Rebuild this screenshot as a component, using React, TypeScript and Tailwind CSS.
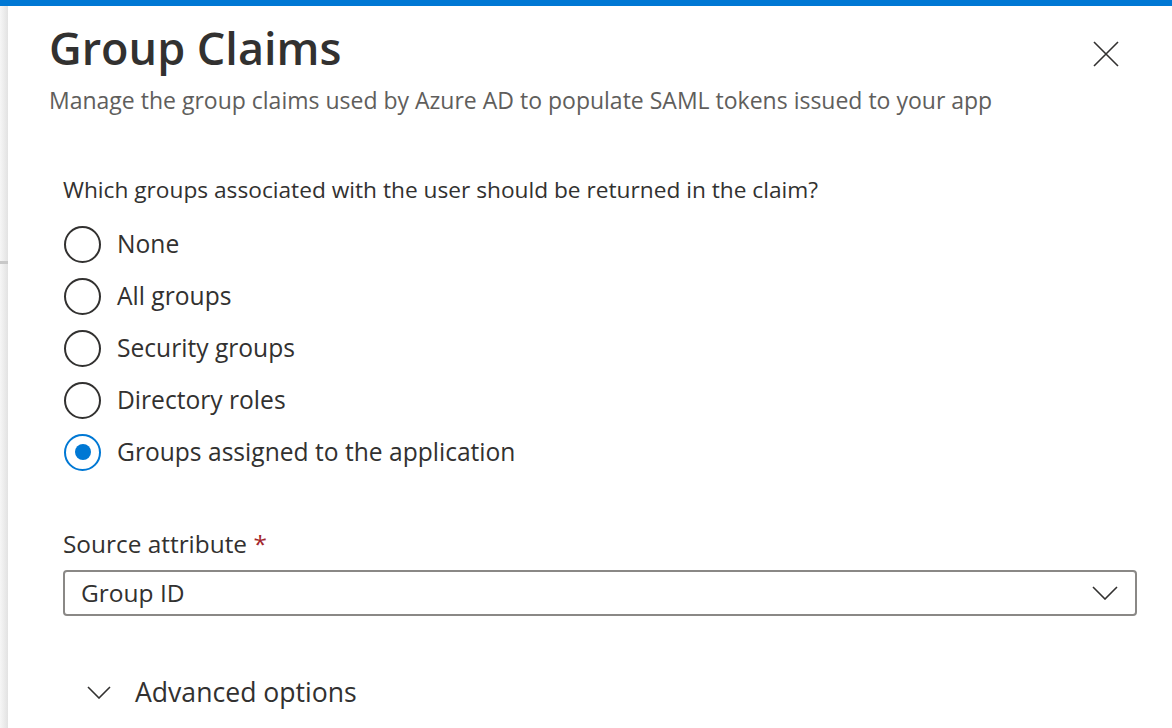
import React, { useState } from "react";

const options = [
  "None",
  "All groups",
  "Security groups",
  "Directory roles",
  "Groups assigned to the application",
];

const font = { fontFamily: '"Segoe UI", "Open Sans", "Noto Sans", sans-serif' };

const Radio: React.FC<{ checked: boolean }> = ({ checked }) => (
  <span
    className={
      checked
        ? "flex h-[37px] w-[37px] items-center justify-center rounded-full border-2 border-[#0078d4]"
        : "flex h-[37px] w-[37px] items-center justify-center rounded-full border-2 border-[#323130]"
    }
  >
    {checked && <span className="h-[16px] w-[16px] rounded-full bg-[#0078d4]" />}
  </span>
);

export default function App() {
  const [selected, setSelected] = useState(4);

  return (
    <div
      className="flex h-[728px] w-[1172px] flex-col overflow-hidden bg-white text-[#323130]"
      style={font}
    >
      <div className="h-[6px] bg-[#0078d4]" />

      <div className="flex flex-1">
        {/* edge of the page behind the panel */}
        <div className="flex w-[8px] flex-col">
          <div className="h-[255px] bg-gradient-to-r from-[#f6f6f6] to-[#e2e2e2]" />
          <div className="h-[3px] bg-[#c8c8c8]" />
          <div className="flex-1 bg-gradient-to-r from-[#f6f6f6] to-[#e2e2e2]" />
        </div>

        <div className="flex-1 pl-[41px] pr-[35px]">
          {/*<--- Header --->*/}
          <div className="flex items-start justify-between pt-[11px]">
            <div>
              <h1 className="text-[45px] font-semibold leading-[62px]">Group Claims</h1>
              <p className="mt-[5px] text-[23px] leading-[32px] text-[#605e5c]">
                Manage the group claims used by Azure AD to populate SAML tokens issued to your app
              </p>
            </div>
            <button className="mt-[24px] mr-[18px] p-0">
              <svg width="26" height="26" viewBox="0 0 26 26">
                <path d="M1 1 L25 25 M25 1 L1 25" stroke="#323130" strokeWidth="1.6" fill="none" />
              </svg>
            </button>
          </div>

          {/*<--- Form --->*/}
          <div className="pl-[14px] pt-[58px]">
            <p className="text-[22.7px] leading-[32px]">
              Which groups associated with the user should be returned in the claim?
            </p>

            <div className="mt-[12px] flex flex-col">
              {options.map((label, i) => (
                <label
                  key={label}
                  className="flex h-[52px] cursor-pointer items-center gap-[16px] pl-[1px]"
                  onClick={() => setSelected(i)}
                >
                  <Radio checked={selected === i} />
                  <span className="text-[24.6px] leading-[32px]">{label}</span>
                </label>
              ))}
            </div>

            <div className="mt-[50px] text-[24.4px] leading-[32px]">
              Source attribute <span className="text-[#a4262c]">*</span>
            </div>

            <div className="mt-[10px] flex h-[46px] items-center justify-between rounded-[4px] border-2 border-[#8a8886] pl-[16px] pr-[17px]">
              <span className="text-[24.5px] leading-[32px]">Group ID</span>
              <svg width="26" height="14" viewBox="0 0 26 14">
                <path d="M1 1 L13 13 L25 1" stroke="#323130" strokeWidth="1.6" fill="none" />
              </svg>
            </div>

            <button className="mt-[59px] flex items-center gap-[24px] pl-[24px]">
              <svg width="24" height="13" viewBox="0 0 24 13">
                <path d="M1 1 L12 12 L23 1" stroke="#323130" strokeWidth="1.6" fill="none" />
              </svg>
              <span className="text-[26.6px] leading-[34px]">Advanced options</span>
            </button>
          </div>
        </div>
      </div>
    </div>
  );
}
